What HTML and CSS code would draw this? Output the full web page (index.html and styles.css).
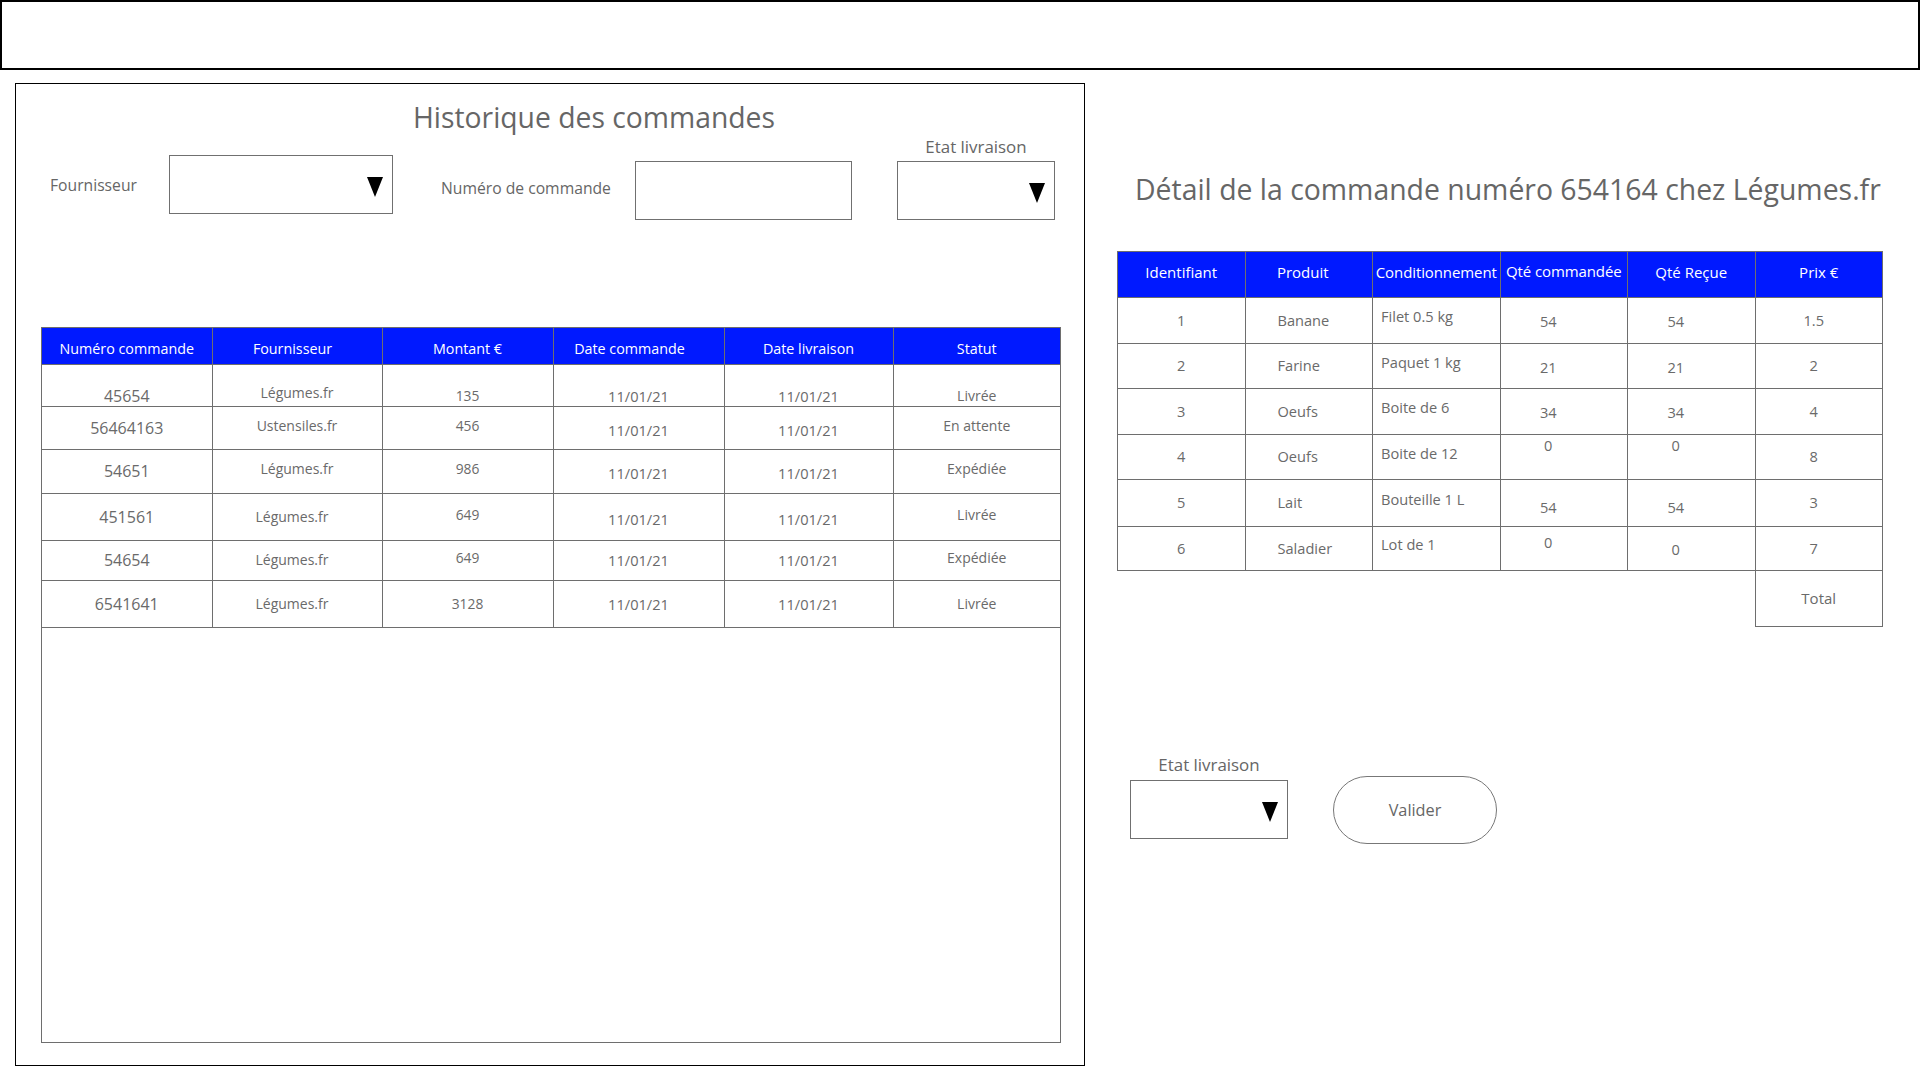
FILE: index.html
```html
<!DOCTYPE html>
<html lang="fr">
<head>
<meta charset="utf-8">
<title>Historique des commandes</title>
<link rel="stylesheet" href="styles.css">
</head>
<body>
<div class="topbar"></div>
<div class="main">
  <section class="history">
    <h1 class="history-title">Historique des commandes</h1>
    <div class="filters">
      <div class="filter filter-supplier">
        <span class="label label-supplier">Fournisseur</span>
        <div class="select select-supplier"><span class="arrow"></span></div>
      </div>
      <div class="filter filter-number">
        <span class="label label-number">Numéro de commande</span>
        <div class="textbox"></div>
      </div>
      <div class="filter filter-status">
        <span class="label label-status">Etat livraison</span>
        <div class="select select-status"><span class="arrow"></span></div>
      </div>
    </div>
    <div class="orders">
      <table class="orders-table">
        <colgroup>
          <col class="oc1"><col class="oc2"><col class="oc3"><col class="oc4"><col class="oc5"><col class="oc6">
        </colgroup>
        <thead>
          <tr class="head">
            <th>Numéro commande</th><th class="shift-s">Fournisseur</th><th>Montant €</th><th class="shift-l">Date commande</th><th>Date livraison</th><th>Statut</th>
          </tr>
        </thead>
        <tbody>
          <tr class="r1 bottom">
            <td class="num">45654</td><td class="name raise">Légumes.fr</td><td class="amt">135</td><td class="date">11/01/21</td><td class="date">11/01/21</td><td class="stat">Livrée</td>
          </tr>
          <tr class="r2">
            <td class="num">56464163</td><td class="name up">Ustensiles.fr</td><td class="amt up">456</td><td class="date down">11/01/21</td><td class="date down">11/01/21</td><td class="stat up">En attente</td>
          </tr>
          <tr class="r3">
            <td class="num">54651</td><td class="name up">Légumes.fr</td><td class="amt up">986</td><td class="date down">11/01/21</td><td class="date down">11/01/21</td><td class="stat up">Expédiée</td>
          </tr>
          <tr class="r4">
            <td class="num">451561</td><td class="name left">Légumes.fr</td><td class="amt up">649</td><td class="date down">11/01/21</td><td class="date down">11/01/21</td><td class="stat up">Livrée</td>
          </tr>
          <tr class="r5">
            <td class="num">54654</td><td class="name left">Légumes.fr</td><td class="amt up">649</td><td class="date">11/01/21</td><td class="date">11/01/21</td><td class="stat up">Expédiée</td>
          </tr>
          <tr class="r6">
            <td class="num">6541641</td><td class="name left">Légumes.fr</td><td class="amt">3128</td><td class="date">11/01/21</td><td class="date">11/01/21</td><td class="stat">Livrée</td>
          </tr>
        </tbody>
      </table>
    </div>
  </section>

  <section class="detail">
    <h2 class="detail-title">Détail de la commande numéro 654164 chez Légumes.fr</h2>
    <table class="detail-table">
      <thead>
        <tr class="head">
          <th>Identifiant</th><th class="shift-s">Produit</th><th class="tight">Conditionnement</th><th class="tight up">Qté commandée</th><th>Qté Reçue</th><th>Prix €</th>
        </tr>
      </thead>
      <tbody>
        <tr class="d1">
          <td class="id">1</td><td class="prod">Banane</td><td class="pack">Filet 0.5 kg</td><td class="qty">54</td><td class="qty">54</td><td class="price">1.5</td>
        </tr>
        <tr class="d2">
          <td class="id">2</td><td class="prod">Farine</td><td class="pack">Paquet 1 kg</td><td class="qty">21</td><td class="qty">21</td><td class="price">2</td>
        </tr>
        <tr class="d3">
          <td class="id">3</td><td class="prod">Oeufs</td><td class="pack">Boite de 6</td><td class="qty">34</td><td class="qty">34</td><td class="price">4</td>
        </tr>
        <tr class="d4">
          <td class="id">4</td><td class="prod">Oeufs</td><td class="pack">Boite de 12</td><td class="qty top">0</td><td class="qty top">0</td><td class="price">8</td>
        </tr>
        <tr class="d5">
          <td class="id">5</td><td class="prod">Lait</td><td class="pack">Bouteille 1 L</td><td class="qty low">54</td><td class="qty low">54</td><td class="price">3</td>
        </tr>
        <tr class="d6">
          <td class="id">6</td><td class="prod">Saladier</td><td class="pack">Lot de 1</td><td class="qty top6">0</td><td class="qty">0</td><td class="price">7</td>
        </tr>
        <tr class="total-row">
          <td class="blank"></td><td class="blank"></td><td class="blank"></td><td class="blank"></td><td class="blank"></td><td class="total">Total</td>
        </tr>
      </tbody>
    </table>

    <div class="actions">
      <div class="action-status">
        <span class="label label-status">Etat livraison</span>
        <div class="select select-small"><span class="arrow"></span></div>
      </div>
      <button class="validate" type="button">Valider</button>
    </div>
  </section>
</div>
</body>
</html>
```

FILE: styles.css
```css
* {
  box-sizing: border-box;
}

html, body {
  margin: 0;
  padding: 0;
}

body {
  width: 1920px;
  height: 1080px;
  overflow: hidden;
  background: #ffffff;
  font-family: "Open Sans", "Noto Sans", "DejaVu Sans", sans-serif;
  color: #666666;
}

.topbar {
  height: 70px;
  border: 2px solid #000000;
}

.main {
  display: flex;
  align-items: flex-start;
}

/* ---------- left panel ---------- */
.history {
  margin: 13px 0 0 15px;
  width: 1070px;
  height: 983px;
  border: 1px solid #000000;
}

.history-title {
  margin: 14px 0 0 397px;
  font-size: 28.3px;
  font-weight: 400;
  line-height: 38px;
  color: #666666;
  white-space: nowrap;
}

.filters {
  display: flex;
  align-items: flex-start;
  padding-left: 34px;
}

.filter {
  display: flex;
}

.filter-supplier {
  align-items: center;
  margin-top: 19px;
}

.filter-number {
  align-items: center;
  margin-top: 25px;
  margin-left: 48px;
}

.filter-status {
  flex-direction: column;
  margin-left: 45px;
  width: 158px;
}

.label {
  font-size: 15.7px;
  line-height: 22px;
  color: #666666;
  white-space: nowrap;
}

.label-supplier {
  width: 119px;
}

.label-number {
  width: 194px;
  padding-bottom: 5px;
}

.label-status {
  font-size: 16.9px;
  text-align: center;
  display: block;
}

.select,
.textbox {
  height: 59px;
  border: 1px solid #707070;
  background: #ffffff;
}

.select {
  display: flex;
  justify-content: flex-end;
  align-items: center;
  padding-right: 9px;
}

.select-supplier {
  width: 224px;
}

.select-status {
  width: 158px;
  margin-top: 3px;
}

.textbox {
  width: 217px;
}

.arrow {
  width: 0;
  height: 0;
  margin-top: 4px;
  border-left: 8px solid transparent;
  border-right: 8px solid transparent;
  border-top: 20px solid #000000;
}

/* orders table */
.orders {
  margin: 107px 0 0 25px;
  width: 1020px;
  height: 716px;
  border: 1px solid #6e6e6e;
}

.orders-table {
  width: 100%;
  table-layout: fixed;
  border-collapse: collapse;
}

.oc1 { width: 170px; }
.oc2 { width: 170px; }
.oc3 { width: 171px; }
.oc4 { width: 171px; }
.oc5 { width: 169px; }
.oc6 { width: 167px; }

.orders-table th,
.orders-table td {
  padding: 0;
  text-align: center;
  vertical-align: middle;
  border-right: 1px solid #6e6e6e;
  border-bottom: 1px solid #6e6e6e;
  white-space: nowrap;
}

.orders-table th:last-child,
.orders-table td:last-child {
  border-right: none;
}

.orders-table th {
  background: #0019ff;
  color: #ffffff;
  font-weight: 400;
  font-size: 14.3px;
  padding-top: 6px;
}

.orders-table th.shift-s {
  padding-right: 9px;
}

.orders-table th.shift-l {
  padding-right: 18px;
}

.orders-table td {
  font-size: 14px;
  line-height: 20px;
  color: #6a6a6a;
}

.orders-table td.num {
  font-size: 16px;
}

.orders-table td.name {
  font-size: 14px;
}

.orders-table td.name.left {
  padding-right: 10px;
}

.orders-table td.name.raise {
  padding-bottom: 3px;
}

.orders-table td.amt {
  font-size: 13.8px;
}

.orders-table td.date {
  font-size: 14.6px;
}

.orders-table td.stat {
  font-size: 14px;
}

.orders-table .head { height: 36px; }
.orders-table .r1 { height: 42px; }
.orders-table .r2 { height: 43px; }
.orders-table .r3 { height: 44px; }
.orders-table .r4 { height: 47px; }
.orders-table .r5 { height: 40px; }
.orders-table .r6 { height: 47px; }

.orders-table .bottom td {
  vertical-align: bottom;
}

.orders-table td.up {
  padding-bottom: 4px;
}

.orders-table td.down {
  padding-top: 4px;
}

/* ---------- right panel ---------- */
.detail {
  margin-left: 32px;
  width: 766px;
}

.detail-title {
  margin: 100px 0 0 18px;
  font-size: 28.4px;
  font-weight: 400;
  line-height: 38px;
  color: #666666;
  white-space: nowrap;
}

.detail-table {
  margin-top: 43px;
  width: 766px;
  table-layout: fixed;
  border-collapse: collapse;
}

.detail-table th,
.detail-table td {
  padding: 0;
  border: 1px solid #6e6e6e;
  vertical-align: middle;
  white-space: nowrap;
}

.detail-table th {
  background: #0019ff;
  color: #ffffff;
  font-weight: 400;
  font-size: 15px;
  text-align: center;
  padding-bottom: 5px;
}

.detail-table th.shift-s {
  padding-right: 12px;
}

.detail-table th.tight {
  font-size: 15px;
  letter-spacing: -0.1px;
  overflow: visible;
}

.detail-table th.up {
  padding-bottom: 8px;
}

.detail-table td {
  font-size: 14.6px;
  color: #6a6a6a;
  padding-bottom: 2px;
}

.detail-table .head { height: 46px; }
.detail-table .d1 { height: 46px; }
.detail-table .d2 { height: 45px; }
.detail-table .d3 { height: 46px; }
.detail-table .d4 { height: 45px; }
.detail-table .d5 { height: 47px; }
.detail-table .d6 { height: 44px; }
.detail-table .total-row { height: 56px; }

.detail-table td.id {
  text-align: center;
}

.detail-table td.prod {
  text-align: left;
  padding-left: 32px;
}

.detail-table td.pack {
  text-align: left;
  padding-left: 8px;
  padding-bottom: 9px;
}

.detail-table td.qty {
  text-align: center;
  padding-right: 31px;
  padding-top: 1px;
  padding-bottom: 0;
}

.detail-table td.qty.top {
  vertical-align: top;
  padding-top: 0;
}

.detail-table td.qty.low {
  padding-top: 8px;
}

.detail-table td.qty.top6 {
  padding-top: 0;
  padding-bottom: 14px;
}

.detail-table td.price {
  text-align: center;
  padding-right: 10px;
}

.detail-table td.blank {
  border: none;
}

.detail-table td.total {
  text-align: center;
  font-size: 15px;
}

/* actions */
.actions {
  display: flex;
  align-items: flex-start;
  margin: 127px 0 0 13px;
}

.action-status {
  display: flex;
  flex-direction: column;
  width: 158px;
}

.select-small {
  width: 158px;
  margin-top: 4px;
}

.validate {
  margin: 22px 0 0 45px;
  width: 164px;
  height: 68px;
  border: 1px solid #777777;
  border-radius: 34px;
  background: #ffffff;
  font-family: inherit;
  font-size: 16.3px;
  color: #666666;
  padding: 0;
}
```
